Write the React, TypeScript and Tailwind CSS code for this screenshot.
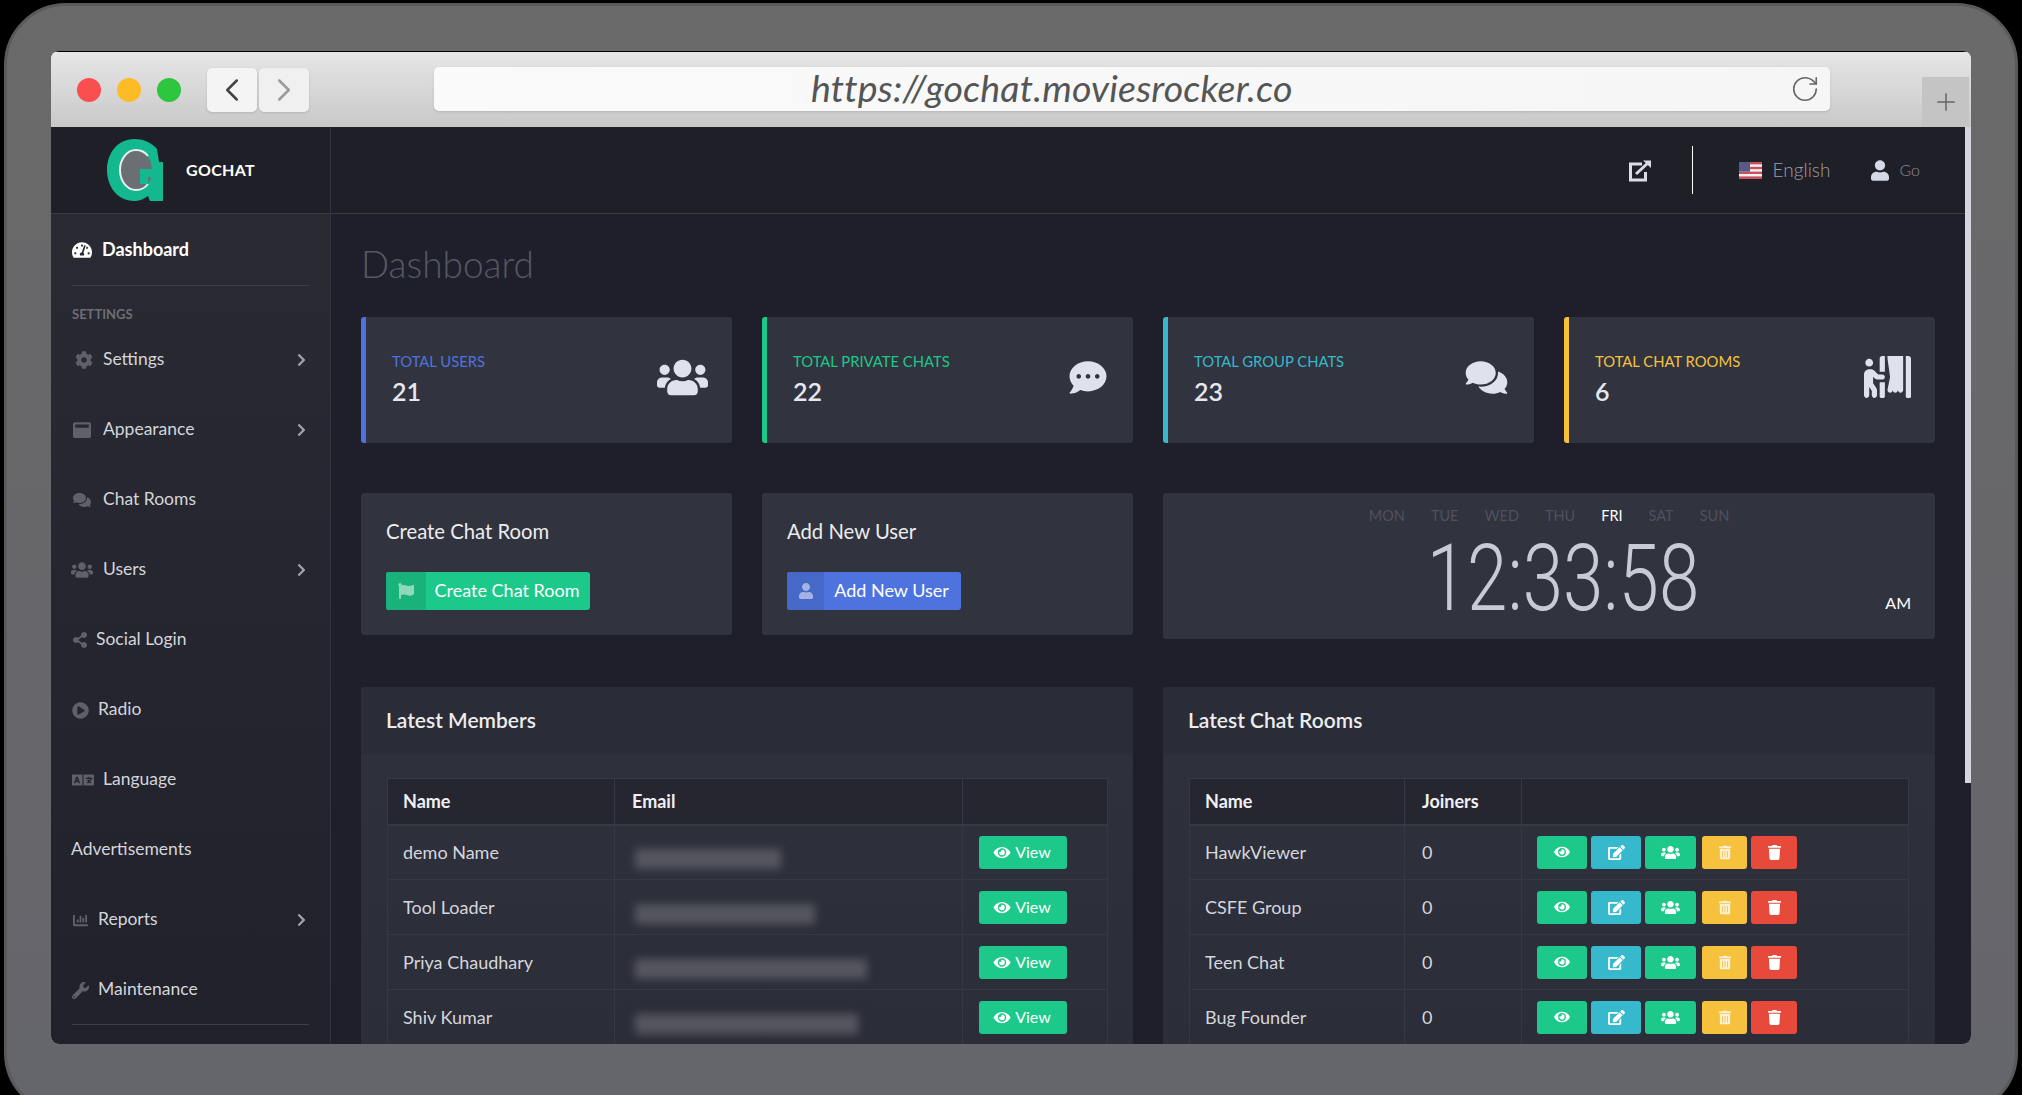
import { ChevronLeft, ChevronRight as ArrowRight, Plus, RotateCw } from 'lucide-react'
import type { IconType } from 'react-icons'
import {
  FaChartBar,
  FaChevronRight,
  FaCog,
  FaCommentDots,
  FaComments,
  FaEdit,
  FaEye,
  FaFlag,
  FaLanguage,
  FaPersonBooth,
  FaPlayCircle,
  FaShareAlt,
  FaTachometerAlt,
  FaTrash,
  FaTrashAlt,
  FaUser,
  FaUsers,
  FaWindowMaximize,
  FaWrench,
} from 'react-icons/fa'

type NavItem = { label: string; icon?: IconType; iconClass?: string; textClass?: string; arrow?: boolean }

const navItems: NavItem[] = [
  { label: 'Settings', icon: FaCog, iconClass: 'w-[18px] h-[18px] mx-[3px]', textClass: 'ml-[7px]', arrow: true },
  { label: 'Appearance', icon: FaWindowMaximize, iconClass: 'w-[20px] h-[18px]', textClass: 'ml-[11px]', arrow: true },
  { label: 'Chat Rooms', icon: FaComments, iconClass: 'w-[20px] h-[16px]', textClass: 'ml-[11px]' },
  { label: 'Users', icon: FaUsers, iconClass: 'w-[22px] h-[18px] -ml-px', textClass: 'ml-[10px]', arrow: true },
  { label: 'Social Login', icon: FaShareAlt, iconClass: 'w-[16px] h-[16px]', textClass: 'ml-[8px]' },
  { label: 'Radio', icon: FaPlayCircle, iconClass: 'w-[17px] h-[17px]', textClass: 'ml-[9px]' },
  { label: 'Language', icon: FaLanguage, iconClass: 'w-[22px] h-[18px]', textClass: 'ml-[9px]' },
  { label: 'Advertisements', textClass: '-ml-px' },
  { label: 'Reports', icon: FaChartBar, iconClass: 'w-[17px] h-[15px]', textClass: 'ml-[9px]', arrow: true },
  { label: 'Maintenance', icon: FaWrench, iconClass: 'w-[17px] h-[17px]', textClass: 'ml-[9px]' },
]

const stats = [
  { label: 'TOTAL USERS', value: '21', border: 'border-[#4e73df]', text: 'text-[#4e73df]', icon: FaUsers, iconClass: 'w-[51px] h-[41px]' },
  { label: 'TOTAL PRIVATE CHATS', value: '22', border: 'border-[#1cc88a]', text: 'text-[#1cc88a]', icon: FaCommentDots, iconClass: 'w-[42px] h-[37px]' },
  { label: 'TOTAL GROUP CHATS', value: '23', border: 'border-[#36b9cc]', text: 'text-[#36b9cc]', icon: FaComments, iconClass: 'w-[47px] h-[37px]' },
  { label: 'TOTAL CHAT ROOMS', value: '6', border: 'border-[#f6c23e]', text: 'text-[#f6c23e]', icon: FaPersonBooth, iconClass: 'w-[47px] h-[42px]' },
]

const members = [
  { name: 'demo Name', blur: 'w-[146px]' },
  { name: 'Tool Loader', blur: 'w-[180px]' },
  { name: 'Priya Chaudhary', blur: 'w-[232px]' },
  { name: 'Shiv Kumar', blur: 'w-[223px]' },
]

const rooms = ['HawkViewer', 'CSFE Group', 'Teen Chat', 'Bug Founder']

const days = ['MON', 'TUE', 'WED', 'THU', 'FRI', 'SAT', 'SUN']

function Logo() {
  return (
    <svg viewBox="0 0 56 62" className="w-[56px] h-[62px] shrink-0">
      <path
        d="M27 0C36 0 44 3 50 10L52 23H56V62H43L41 57C37 60 32 62 27 62C11 62 0 48 0 31C0 14 11 0 27 0Z"
        fill="#14b88e"
      />
      <ellipse cx="29" cy="31" rx="16" ry="20" fill="#6b6f73" />
      <path
        d="M41 17C38 13 34 11 29 11C20 11 13 20 13 31C13 42 20 51 29 51C34 51 38 49 41 45"
        fill="none"
        stroke="#e8efee"
        strokeWidth="2"
      />
      <path d="M33 30H56V38H41V45H33Z" fill="#14b88e" />
    </svg>
  )
}

function UsFlag() {
  return (
    <svg viewBox="0 0 23 17" className="w-[23px] h-[17px] shrink-0">
      <rect width="23" height="17" fill="#f2f2f4" />
      <rect y="0" width="23" height="2.4" fill="#c8505f" />
      <rect y="4.8" width="23" height="2.4" fill="#c8505f" />
      <rect y="9.6" width="23" height="2.4" fill="#c8505f" />
      <rect y="14.4" width="23" height="2.6" fill="#c8505f" />
      <rect width="11" height="9.6" fill="#565a84" />
    </svg>
  )
}

function OpenLinkIcon() {
  return (
    <svg viewBox="0 0 24 23" className="w-[24px] h-[23px]" fill="none" stroke="#dcdce8" strokeWidth="3">
      <path d="M14 5H2.5V21H17.5V13" />
      <path d="M8 15L21 3" />
      <path d="M15 1.5H23V9" strokeWidth="0" fill="#dcdce8" />
    </svg>
  )
}

function SidebarRow({ item }: { item: NavItem }) {
  const Icon = item.icon
  return (
    <div className="h-[70px] pl-[21px] pr-[23px] flex items-center text-[17.5px] text-[#d4d5db]">
      {Icon && <Icon className={`${item.iconClass} text-[#5f6068] shrink-0`} />}
      <span className={`-mt-px ${item.textClass ?? ''}`}>{item.label}</span>
      {item.arrow && <FaChevronRight className="ml-auto w-[11px] h-[14px] text-[#a2a3aa]" />}
    </div>
  )
}

function Sidebar() {
  return (
    <aside className="w-[280px] shrink-0 flex flex-col border-r border-[#32333d] bg-gradient-to-b from-[#2a2b33] to-[#20212b]">
      <div className="h-[87px] shrink-0 flex items-center pl-[56px] gap-[23px] bg-[#1f1f27] border-b border-[#3a3b45]">
        <Logo />
        <span className="text-[16px] font-bold text-white tracking-[0.3px]">GOCHAT</span>
      </div>
      <div className="h-[72px] shrink-0 mx-[21px] flex items-center gap-[10px] border-b border-[#3d3e47]">
        <FaTachometerAlt className="w-[20px] h-[18px] text-white" />
        <span className="text-[18px] font-bold text-white">Dashboard</span>
      </div>
      <div className="h-[39px] shrink-0 pl-[21px] pt-[20px] text-[13px] leading-[16px] font-bold text-[#6d6e76]">SETTINGS</div>
      {navItems.map(item => <SidebarRow key={item.label} item={item} />)}
      <div className="mx-[21px] mt-[-1px] border-b border-[#3d3e47]" />
    </aside>
  )
}

function StatCard({ stat }: { stat: (typeof stats)[number] }) {
  const Icon = stat.icon
  return (
    <div className={`h-[126px] pl-[26px] pr-[24px] flex items-center justify-between rounded-[3px] bg-[#31333f] border-l-[5px] ${stat.border}`}>
      <div className="-mt-[4px]">
        <div className={`text-[14.8px] leading-[20px] ${stat.text}`}>{stat.label}</div>
        <div className="mt-[5px] text-[25px] leading-[30px] font-semibold text-[#e6e6ee]">{stat.value}</div>
      </div>
      <Icon className={`${stat.iconClass} text-[#dfe1ec] -mt-[6px]`} />
    </div>
  )
}

function ActionCard({ title, label, icon: Icon, btn, btnDark, iconWidth, width }: { title: string; label: string; icon: IconType; btn: string; btnDark: string; iconWidth: string; width: string }) {
  return (
    <div className="h-[142px] px-[25px] pt-[25px] rounded-[3px] bg-[#31333f]">
      <div className="text-[20.3px] leading-[26px] text-[#eceded]">{title}</div>
      <div className={`mt-[28px] h-[38px] flex rounded-[3px] overflow-hidden ${btn} ${width}`}>
        <div className={`h-full flex items-center justify-center ${btnDark} ${iconWidth}`}>
          <Icon className="w-[16px] h-[16px] text-white/50" />
        </div>
        <div className="flex-1 flex items-center justify-center pr-[2px] pb-[1px] text-[18px] text-white">{label}</div>
      </div>
    </div>
  )
}

function ClockCard() {
  return (
    <div className="h-[146px] pt-[15px] rounded-[3px] bg-[#31333f]">
      <div className="flex justify-center gap-[26px] text-[14.5px] leading-[16px] text-[#4f515d]">
        {days.map(d => (
          <span key={d} className={d === 'FRI' ? 'text-white' : ''}>{d}</span>
        ))}
      </div>
      <div className="flex items-end justify-between h-[88px] mt-[11px] pr-[24px]">
        <span className="ml-[268px] w-[264px] h-[88px] flex items-center justify-center text-[92px] leading-[88px] font-[Roboto,sans-serif] font-light text-[#c9cad3] whitespace-nowrap scale-x-[0.79]">
          12:33:58
        </span>
        <span className="mb-[10px] text-[16px] leading-[20px] text-white">AM</span>
      </div>
    </div>
  )
}

function Panel({ title, children }: { title: string; children: React.ReactNode }) {
  return (
    <div className="rounded-[3px] overflow-hidden bg-gradient-to-b from-[#2f313d] to-[#2b2d38]">
      <div className="h-[68px] px-[25px] pb-[3px] flex items-center text-[21px] font-semibold text-[#eceded] bg-[#2a2c37]">{title}</div>
      <div className="pt-[23px] px-[26px]">{children}</div>
    </div>
  )
}

const th = 'h-[46px] px-[15px] text-left text-[18px] font-bold text-[#f0f0f4] bg-[#25262f] border border-[#363844] border-b-2'
const td = 'h-[55px] px-[15px] text-[18px] text-[#d5d6dd] border border-[#363844]'

function MembersTable() {
  return (
    <table className="w-[720px] table-fixed border-collapse">
      <thead>
        <tr>
          <th className={`${th} w-[227px]`}>Name</th>
          <th className={`${th} w-[348px] pl-[17px]`}>Email</th>
          <th className={`${th} w-[145px]`} />
        </tr>
      </thead>
      <tbody>
        {members.map(m => (
          <tr key={m.name}>
            <td className={td}>{m.name}</td>
            <td className={`${td} pl-[20px]`}>
              <div className={`h-[20px] mt-[14px] bg-[#55565f] blur-[4px] ${m.blur}`} />
            </td>
            <td className={`${td} pl-[16px]`}>
              <div className="w-[88px] h-[33px] rounded-[3px] bg-[#1cc88a] flex items-center justify-center gap-[4px] pr-[2px] text-[16px] text-white">
                <FaEye className="w-[18px] h-[15px]" />
                View
              </div>
            </td>
          </tr>
        ))}
      </tbody>
    </table>
  )
}

function IconButton({ icon: Icon, className, iconClass }: { icon: IconType; className: string; iconClass: string }) {
  return (
    <div className={`h-[33px] rounded-[3px] flex items-center justify-center text-white ${className}`}>
      <Icon className={iconClass} />
    </div>
  )
}

function RoomsTable() {
  return (
    <table className="w-[719px] table-fixed border-collapse">
      <thead>
        <tr>
          <th className={`${th} w-[215px]`}>Name</th>
          <th className={`${th} w-[117px] pl-[17px]`}>Joiners</th>
          <th className={`${th} w-[387px]`} />
        </tr>
      </thead>
      <tbody>
        {rooms.map(r => (
          <tr key={r}>
            <td className={td}>{r}</td>
            <td className={`${td} pl-[17px]`}>0</td>
            <td className={td}>
              <div className="flex gap-[4px]">
                <IconButton icon={FaEye} className="w-[50px] bg-[#1cc88a]" iconClass="w-[16px] h-[14px]" />
                <IconButton icon={FaEdit} className="w-[50px] bg-[#36b9cc]" iconClass="w-[17px] h-[15px]" />
                <IconButton icon={FaUsers} className="w-[51px] mr-[2px] bg-[#1cc88a]" iconClass="w-[19px] h-[15px]" />
                <IconButton icon={FaTrashAlt} className="w-[45px] bg-[#f6c23e]" iconClass="w-[12px] h-[15px] opacity-80" />
                <IconButton icon={FaTrash} className="w-[46px] bg-[#e74a3b]" iconClass="w-[13px] h-[15px]" />
              </div>
            </td>
          </tr>
        ))}
      </tbody>
    </table>
  )
}

function Toolbar() {
  return (
    <div className="h-[76px] shrink-0 flex pl-[26px] bg-gradient-to-b from-[#e6e6e6] to-[#c9c9c9] border-t border-black">
      <div className="flex items-center gap-[16px]">
        <span className="w-[24px] h-[24px] rounded-full bg-[#f9504f]" />
        <span className="w-[24px] h-[24px] rounded-full bg-[#fdbb25]" />
        <span className="w-[24px] h-[24px] rounded-full bg-[#2ec53f]" />
      </div>
      <div className="ml-[26px] flex items-center gap-[2px]">
        <div className="w-[50px] h-[44px] rounded-[5px] bg-[#f4f4f4] flex items-center justify-center shadow-sm">
          <ChevronLeft className="w-[38px] h-[38px] text-[#444]" strokeWidth={1.6} />
        </div>
        <div className="w-[50px] h-[44px] rounded-[5px] bg-[#f0f0f0] flex items-center justify-center shadow-sm">
          <ArrowRight className="w-[38px] h-[38px] text-[#9a9a9a]" strokeWidth={1.6} />
        </div>
      </div>
      <div className="ml-[125px] my-[15px] w-[1396px] h-[44px] rounded-[5px] bg-gradient-to-r from-[#fafafa] to-[#f6f6f6] flex items-center pl-[377px] pr-[10px] shadow-sm">
        <span className="italic text-[37.5px] leading-[44px] -mt-[3px] text-[#555] tracking-[0.2px]">https://gochat.moviesrocker.co</span>
        <RotateCw className="ml-auto w-[30px] h-[30px] text-[#666]" strokeWidth={1.3} />
      </div>
      <div className="ml-[92px] mt-[25px] w-[47px] h-[50px] bg-[#c4c4c4] flex items-center justify-center">
        <Plus className="w-[28px] h-[28px] text-[#666]" strokeWidth={1.3} />
      </div>
    </div>
  )
}

export default function App() {
  return (
    <div className="w-[2022px] h-[1095px] bg-black overflow-hidden font-[Lato,sans-serif]">
      <div className="mx-[4px] mt-[3px] h-[1112px] pt-[48px] px-[47px] rounded-[62px] bg-gradient-to-b from-[#6a6a6a] to-[#65656c] border-[3px] border-[#5a5a5a]">
        <div className="w-[1920px] -ml-[3px] -mt-[3px] h-[993px] flex flex-col rounded-[8px] overflow-hidden bg-[#d5d5dd]">
          <Toolbar />
          <div className="flex-1 min-h-0 flex">
            <Sidebar />
            <main className="w-[1634px] shrink-0 flex flex-col bg-[#1e1f2b]">
              <header className="h-[87px] shrink-0 flex items-center justify-end pr-[45px] bg-[#1f1f27] border-b border-[#3a3b45]">
                <OpenLinkIcon />
                <span className="ml-[40px] w-px h-[48px] bg-white" />
                <span className="ml-[46px]"><UsFlag /></span>
                <span className="ml-[11px] text-[19px] font-light text-[#9c9da6]">English</span>
                <FaUser className="ml-[41px] w-[18px] h-[21px] text-[#d5d8e6]" />
                <span className="ml-[10px] text-[16px] font-light text-[#8a8b95]">Go</span>
              </header>
              <div className="flex-1 min-h-0 overflow-hidden pl-[30px] pr-[30px]">
                <h1 className="h-[100px] mb-[3px] flex items-center text-[37px] font-light text-[#555763]">Dashboard</h1>
                <div className="grid grid-cols-4 gap-[30px]">
                  {stats.map(s => <StatCard key={s.label} stat={s} />)}
                </div>
                <div className="grid grid-cols-4 gap-[30px] mt-[50px] items-start">
                  <ActionCard title="Create Chat Room" label="Create Chat Room" icon={FaFlag} btn="bg-[#1cc88a]" btnDark="bg-[#19b27b]" iconWidth="w-[40px]" width="w-[204px]" />
                  <ActionCard title="Add New User" label="Add New User" icon={FaUser} btn="bg-[#4e73df]" btnDark="bg-[#4668c8]" iconWidth="w-[37px]" width="w-[174px]" />
                  <div className="col-span-2"><ClockCard /></div>
                </div>
                <div className="grid grid-cols-2 gap-[30px] mt-[48px]">
                  <Panel title="Latest Members"><MembersTable /></Panel>
                  <Panel title="Latest Chat Rooms"><RoomsTable /></Panel>
                </div>
              </div>
            </main>
            <div className="w-[6px] shrink-0 flex flex-col">
              <div className="h-[656px] bg-[#d5d5dd]" />
              <div className="flex-1 bg-[#1e1f2b]" />
            </div>
          </div>
        </div>
      </div>
    </div>
  )
}
